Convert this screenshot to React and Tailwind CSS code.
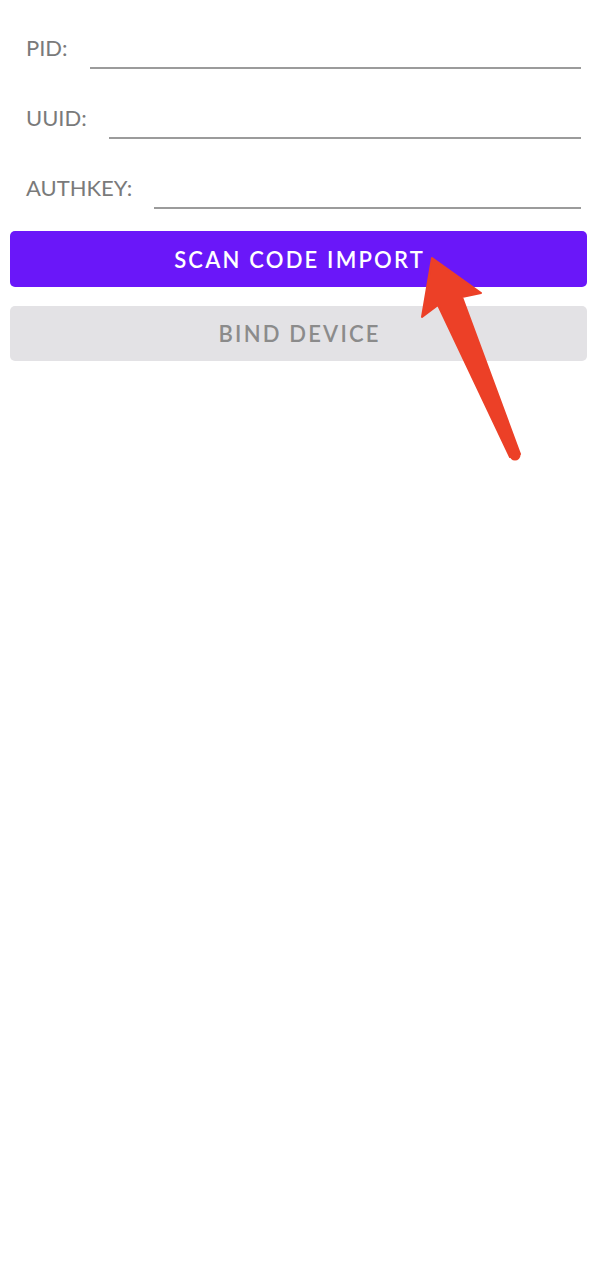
import { useState } from 'react';

const fields = [
  { key: 'pid', label: 'PID:' },
  { key: 'uuid', label: 'UUID:' },
  { key: 'authkey', label: 'AUTHKEY:' },
];

function Field({ label, value, onChange }) {
  return (
    <div className="flex items-end gap-[22px] h-[70px]">
      <label className="mb-[8px] text-[22px] leading-[26px] text-[#7a7a7a] whitespace-nowrap">{label}</label>
      <input
        type="text"
        className="flex-1 min-w-0 h-[40px] bg-transparent border-b-2 border-[#9b9b9b] outline-none text-[20px] text-[#333]"
        value={value}
        onChange={onChange}
      />
    </div>
  );
}

export default function App() {
  const [form, setForm] = useState({ pid: '', uuid: '', authkey: '' });

  return (
    <div className="relative min-h-[1262px] bg-white" style={{ fontFamily: 'Lato, "Noto Sans", sans-serif' }}>
      <div className="flex flex-col pl-[26px] pr-[17px] -mt-[1px]">
        {fields.map(f => (
          <Field
            key={f.key}
            label={f.label}
            value={form[f.key]}
            onChange={e => setForm({ ...form, [f.key]: e.target.value })}
          />
        ))}
      </div>

      <div className="flex flex-col gap-[19px] pl-[10px] pr-[11px] mt-[22px]">
        <button className="h-[56px] rounded-[5px] bg-[#6a17f9] text-white text-[22px] font-semibold tracking-[0.1em] pl-[0.1em]">
          SCAN CODE IMPORT
        </button>
        <button disabled className="h-[55px] rounded-[5px] bg-[#e3e2e5] text-[#8b8b8b] text-[22px] font-semibold tracking-[0.1em] pl-[0.1em]">
          BIND DEVICE
        </button>
      </div>

      {/* annotation arrow */}
      <svg className="absolute left-0 top-0 pointer-events-none" width="598" height="480" viewBox="0 0 598 480">
        <polygon
          points="432,259 481,294 462,298 520,455 510,458 438,306 422,318"
          fill="#ec4027"
          stroke="#ec4027"
          strokeWidth="2"
          strokeLinejoin="round"
        />
        <circle cx="515" cy="456" r="5.5" fill="#ec4027" />
      </svg>
    </div>
  );
}
